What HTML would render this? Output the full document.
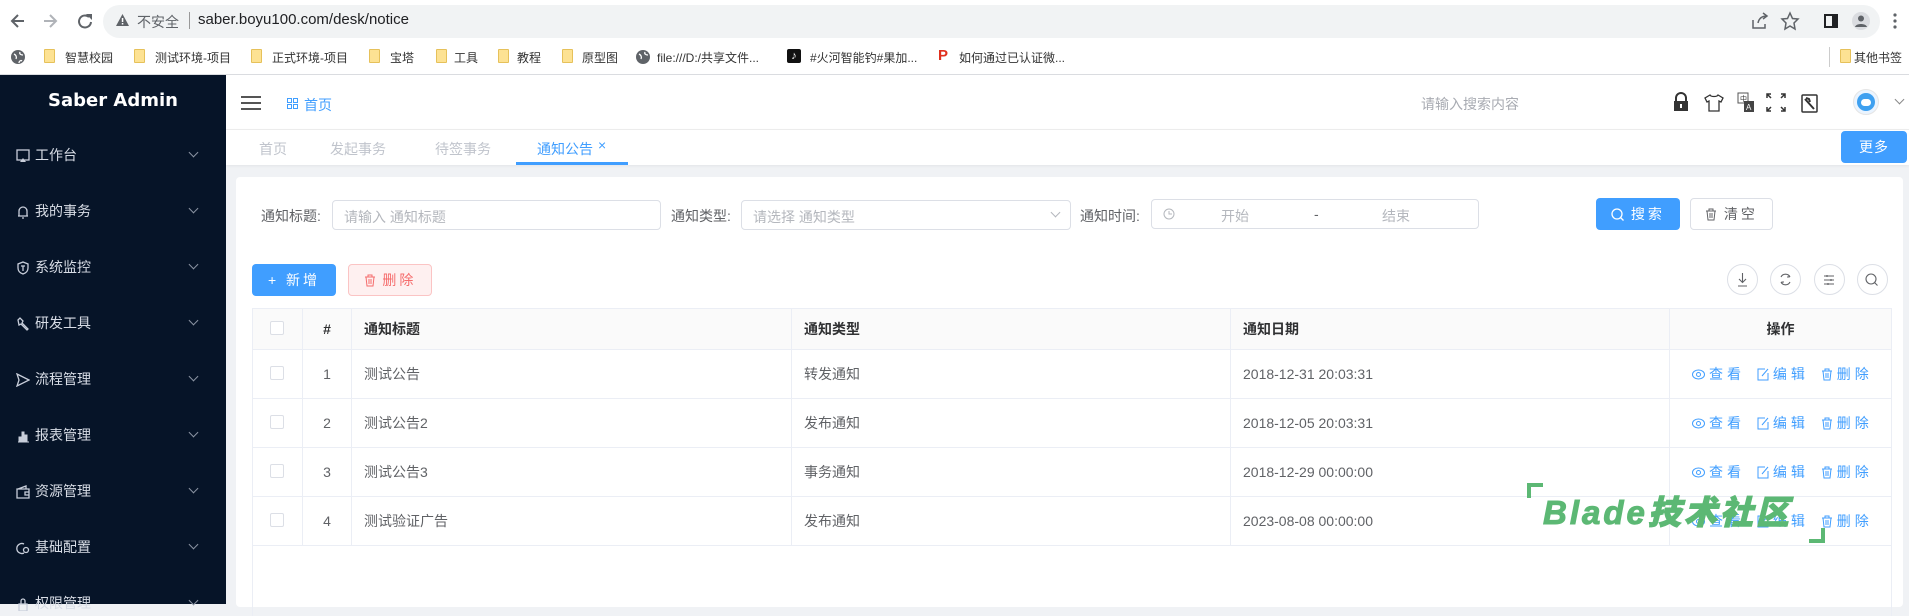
<!DOCTYPE html>
<html><head><meta charset="utf-8"><style>
*{box-sizing:border-box;margin:0;padding:0}
body{width:1909px;height:604px;overflow:hidden;background:#f0f2f5;font-family:"Liberation Sans","Noto Sans CJK SC",sans-serif;font-size:14px;color:#606266;position:relative}
.a{position:absolute}
.top{left:0;top:0;width:1909px;height:41px;background:#fff}
.omni{left:103px;top:5px;width:1777px;height:33px;background:#f1f3f4;border-radius:17px}
.bm{left:0;top:41px;width:1909px;height:34px;background:#fff;border-bottom:1px solid #dadce0;font-size:12px;color:#333}
.fold{width:11px;height:14px;background:#fde293;border:1px solid #e6c15a;border-radius:1px}
.side{left:0;top:75px;width:226px;height:529px;background:#061428}
.mi{left:16px;color:#d8dde6;font-size:14px}
.mi svg{vertical-align:-3px;margin-right:5px}
.chev{left:190px;width:7px;height:7px;border-right:1px solid #8a93a2;border-bottom:1px solid #8a93a2;transform:rotate(45deg)}
.hdr{left:226px;top:75px;width:1683px;height:55px;background:#fff;border-bottom:1px solid #eee}
.tabs{left:226px;top:130px;width:1683px;height:35px;background:#fff;box-shadow:0 1px 3px rgba(0,0,0,.06)}
.card{left:236px;top:177px;width:1667px;height:430px;background:#fff;border-radius:4px}
.inp{border:1px solid #dcdfe6;border-radius:4px;background:#fff;color:#b4b7bd;font-size:14px}
.btn{border-radius:4px;font-size:14px;text-align:center;letter-spacing:3px}
.rb{width:31px;height:31px;border:1px solid #dcdfe6;border-radius:50%;background:#fff}
table{border-collapse:collapse;position:absolute;left:252px;top:308px;width:1639px;table-layout:fixed}
td,th{border:1px solid #ebeef5;height:49px;font-size:14px;padding-left:12px;text-align:left}
th{background:#fafafa;color:#303133;font-weight:bold;height:41px}
td{color:#606266}
.cb{display:inline-block;width:14px;height:14px;border:1px solid #dcdfe6;border-radius:2px;background:#fff}
.op{color:#409eff;letter-spacing:4px;white-space:nowrap}
.op svg{vertical-align:-2px;margin-right:4px}
.op span{margin-right:4px}
</style></head><body>
<div class="a top"></div>
<svg class="a" style="left:10px;top:12px" width="90" height="18" viewBox="0 0 90 18"><path d="M14 9H3M8 3L2 9l6 6" stroke="#5f6368" stroke-width="2" fill="none"/><path d="M34 9H45M40 3l6 6-6 6" stroke="#b0b3b8" stroke-width="2" fill="none"/><path d="M79 5a6 6 0 1 0 2 5" stroke="#5f6368" stroke-width="2" fill="none"/><path d="M76 2h6v6z" fill="#5f6368"/></svg>
<div class="a omni"></div>
<svg class="a" style="left:115px;top:13px" width="15" height="14"><path d="M7.5 1L14 13H1z" fill="#5f6368"/><rect x="6.8" y="5" width="1.5" height="4" fill="#fff"/><rect x="6.8" y="10" width="1.5" height="1.5" fill="#fff"/></svg>
<div class="a" style="left:137px;top:12px;font-size:14px;color:#5f6368">不安全</div>
<div class="a" style="left:189px;top:12px;width:1px;height:17px;background:#999"></div>
<div class="a" style="left:198px;top:11px;font-size:15px;color:#202124">saber.boyu100.com/desk/notice</div>
<svg class="a" style="left:1750px;top:11px" width="160" height="20"><path d="M3 9v8h12v-4M8 12c1-5 4-7 9-7M13 2l4 3-4 3" stroke="#5f6368" stroke-width="1.5" fill="none"/><path d="M40 2l2.5 5.5 5.5.5-4 4 1 6-5-3-5 3 1-6-4-4 5.5-.5z" stroke="#5f6368" stroke-width="1.5" fill="none"/><rect x="75" y="4" width="12" height="12" stroke="#202124" stroke-width="2" fill="none"/><rect x="82" y="4" width="5" height="12" fill="#202124"/><circle cx="111" cy="10" r="9" fill="#dadce0"/><circle cx="111" cy="7.5" r="3" fill="#5f6368"/><path d="M105 16c1-4 11-4 12 0" fill="#5f6368"/><circle cx="145" cy="4" r="1.6" fill="#5f6368"/><circle cx="145" cy="10" r="1.6" fill="#5f6368"/><circle cx="145" cy="16" r="1.6" fill="#5f6368"/></svg>
<div class="a bm"></div>
<svg class="a" style="left:11px;top:50px" width="14" height="14"><circle cx="7" cy="7" r="7" fill="#5f6368"/><path d="M3 4c2 1 3 3 2 5M9 2c-1 2 1 3 3 3M8 13c0-2 2-3 3-2" stroke="#fff" stroke-width="1.3" fill="none"/></svg>
<div class="a fold" style="left:44px;top:49px"></div><div class="a" style="left:65px;top:49px;font-size:12px;color:#333">智慧校园</div>
<div class="a fold" style="left:134px;top:49px"></div><div class="a" style="left:155px;top:49px;font-size:12px;color:#333">测试环境-项目</div>
<div class="a fold" style="left:251px;top:49px"></div><div class="a" style="left:272px;top:49px;font-size:12px;color:#333">正式环境-项目</div>
<div class="a fold" style="left:369px;top:49px"></div><div class="a" style="left:390px;top:49px;font-size:12px;color:#333">宝塔</div>
<div class="a fold" style="left:436px;top:49px"></div><div class="a" style="left:454px;top:49px;font-size:12px;color:#333">工具</div>
<div class="a fold" style="left:498px;top:49px"></div><div class="a" style="left:517px;top:49px;font-size:12px;color:#333">教程</div>
<div class="a fold" style="left:562px;top:49px"></div><div class="a" style="left:582px;top:49px;font-size:12px;color:#333">原型图</div>
<svg class="a" style="left:636px;top:50px" width="14" height="14"><circle cx="7" cy="7" r="7" fill="#5f6368"/><path d="M3 4c2 1 3 3 2 5M9 2c-1 2 1 3 3 3" stroke="#fff" stroke-width="1.3" fill="none"/></svg>
<div class="a" style="left:657px;top:49px;font-size:12px;color:#333">file:///D:/共享文件...</div>
<div class="a" style="left:787px;top:49px;width:14px;height:14px;background:#111;border-radius:2px;color:#fff;font-size:11px;text-align:center;line-height:14px">♪</div>
<div class="a" style="left:810px;top:49px;font-size:12px;color:#333">#火河智能钓#果加...</div>
<div class="a" style="left:938px;top:47px;color:#e0301e;font-weight:bold;font-size:15px">P</div>
<div class="a" style="left:959px;top:49px;font-size:12px;color:#333">如何通过已认证微...</div>
<div class="a" style="left:1829px;top:47px;width:1px;height:20px;background:#ccc"></div>
<div class="a fold" style="left:1840px;top:49px"></div><div class="a" style="left:1854px;top:49px;font-size:12px;color:#333">其他书签</div>

<div class="a side"></div>
<div class="a" style="left:0;top:90px;width:226px;text-align:center;color:#fff;font-weight:bold;font-size:18px;font-family:'DejaVu Sans','Liberation Sans',sans-serif">Saber Admin</div>
<div class="a mi" style="top:145px"><svg width="14" height="14"><rect x="1" y="1" width="12" height="10" stroke="#c8ceda" fill="none" stroke-width="1.3"/><path d="M4 13l3-4 3 4z" fill="#c8ceda"/></svg>工作台</div>
<div class="a mi" style="top:201px"><svg width="14" height="14"><path d="M3 11V6a4 4 0 0 1 8 0v5H2h10M6 13h2" stroke="#c8ceda" fill="none" stroke-width="1.3"/></svg>我的事务</div>
<div class="a mi" style="top:257px"><svg width="14" height="14"><path d="M7 1l5 2v4c0 3-2 5-5 6-3-1-5-3-5-6V3z M5 5h4M7 5v5" stroke="#c8ceda" fill="none" stroke-width="1.3"/></svg>系统监控</div>
<div class="a mi" style="top:313px"><svg width="14" height="14"><path d="M2 3l2-2 3 3-1 2 6 6-1 1-6-6-2 1z" stroke="#c8ceda" fill="none" stroke-width="1.3"/></svg>研发工具</div>
<div class="a mi" style="top:369px"><svg width="14" height="14"><path d="M1 1l12 6-12 6 2-6z" stroke="#c8ceda" fill="none" stroke-width="1.3"/></svg>流程管理</div>
<div class="a mi" style="top:425px"><svg width="14" height="14"><path d="M2 13h11M3 8h2v5H3zM6 3h2v10H6zM9 6h2v7H9z" fill="#c8ceda" stroke="#c8ceda"/></svg>报表管理</div>
<div class="a mi" style="top:481px"><svg width="14" height="14"><path d="M1 4h12v9H1zM2 4l8-3v3M9 7h4v3H9z" stroke="#c8ceda" fill="none" stroke-width="1.3"/></svg>资源管理</div>
<div class="a mi" style="top:537px"><svg width="14" height="14"><path d="M8 3a5 5 0 1 0 0 9" stroke="#c8ceda" fill="none" stroke-width="1.3"/><circle cx="10" cy="9" r="2.5" stroke="#c8ceda" fill="none" stroke-width="1.3"/></svg>基础配置</div>
<div class="a mi" style="top:593px"><svg width="14" height="14"><path d="M3 7h8v7H3zM5 7V4a2 2 0 0 1 4 0v3" stroke="#c8ceda" fill="none" stroke-width="1.3"/></svg>权限管理</div>
<div class="a chev" style="top:149px"></div><div class="a chev" style="top:205px"></div><div class="a chev" style="top:261px"></div><div class="a chev" style="top:317px"></div><div class="a chev" style="top:373px"></div><div class="a chev" style="top:429px"></div><div class="a chev" style="top:485px"></div><div class="a chev" style="top:541px"></div><div class="a chev" style="top:597px"></div>

<div class="a hdr"></div>
<svg class="a" style="left:241px;top:95px" width="20" height="16"><path d="M0 2h20M0 8h20M0 14h20" stroke="#555" stroke-width="2"/></svg>
<svg class="a" style="left:287px;top:98px" width="11" height="11"><g stroke="#409eff" fill="none"><rect x="0.5" y="0.5" width="4" height="4"/><rect x="6.5" y="0.5" width="4" height="4"/><rect x="0.5" y="6.5" width="4" height="4"/><rect x="6.5" y="6.5" width="4" height="4"/></g></svg>
<div class="a" style="left:304px;top:95px;color:#409eff;font-size:14px">首页</div>
<div class="a" style="left:1421px;top:94px;color:#a8abb2;font-size:14px">请输入搜索内容</div>
<svg class="a" style="left:1672px;top:92px" width="150" height="22"><path d="M4 9V6a5 5 0 0 1 10 0v3" stroke="#333" stroke-width="2" fill="none"/><rect x="2" y="9" width="14" height="10" fill="#333"/><rect x="8" y="12" width="2" height="4" fill="#fff"/><path d="M38 3l-5 3 2 4 2-1v10h10V9l2 1 2-4-5-3c-1 2-7 2-8 0z" stroke="#333" stroke-width="1.3" fill="none"/><rect x="66" y="1" width="10" height="10" stroke="#555" fill="#fff"/><text x="68" y="9" font-size="7" fill="#333">中</text><rect x="72" y="9" width="10" height="11" fill="#444"/><text x="74" y="18" font-size="8" fill="#fff">A</text><path d="M99 2h-4v4M95 2l4 4M109 2h4v4M113 2l-4 4M99 19h-4v-4M95 19l4-4M109 19h4v-4M113 19l-4-4" stroke="#333" stroke-width="1.5" fill="none"/><rect x="130" y="3" width="15" height="17" rx="1" stroke="#333" stroke-width="1.5" fill="none"/><path d="M133 7l9 10M134 6l3 1 1 3" stroke="#333" stroke-width="2" fill="none"/></svg>
<div class="a" style="left:1853px;top:89px;width:26px;height:26px;border-radius:50%;background:#eaf4ff;border:1px solid #e5e5e5"></div>
<div class="a" style="left:1857px;top:93px;width:18px;height:18px;border-radius:50%;background:#3ea0f0"></div>
<div class="a" style="left:1861px;top:99px;width:10px;height:7px;border-radius:4px;background:#fff"></div>
<div class="a" style="left:1896px;top:96px;width:7px;height:7px;border-right:1px solid #888;border-bottom:1px solid #888;transform:rotate(45deg)"></div>

<div class="a tabs"></div>
<div class="a" style="left:259px;top:139px;color:#c0c4cc">首页</div>
<div class="a" style="left:330px;top:139px;color:#c0c4cc">发起事务</div>
<div class="a" style="left:435px;top:139px;color:#c0c4cc">待签事务</div>
<div class="a" style="left:537px;top:139px;color:#409eff">通知公告</div>
<div class="a" style="left:598px;top:137px;color:#409eff;font-size:14px">×</div>
<div class="a" style="left:516px;top:162px;width:112px;height:3px;background:#409eff"></div>
<div class="a btn" style="left:1841px;top:131px;width:66px;height:32px;background:#409eff;color:#fff;line-height:32px;letter-spacing:1px">更多</div>

<div class="a card"></div>
<div class="a" style="left:261px;top:206px">通知标题:</div>
<div class="a inp" style="left:332px;top:200px;width:329px;height:30px;padding:6px 11px">请输入 通知标题</div>
<div class="a" style="left:671px;top:206px">通知类型:</div>
<div class="a inp" style="left:741px;top:200px;width:330px;height:30px;padding:6px 11px">请选择 通知类型</div>
<div class="a" style="left:1052px;top:209px;width:7px;height:7px;border-right:1px solid #b4b7bd;border-bottom:1px solid #b4b7bd;transform:rotate(45deg)"></div>
<div class="a" style="left:1080px;top:206px">通知时间:</div>
<div class="a inp" style="left:1151px;top:199px;width:328px;height:30px"></div>
<svg class="a" style="left:1163px;top:208px" width="12" height="12"><circle cx="6" cy="6" r="5" stroke="#b4b7bd" fill="none"/><path d="M6 3v3h3" stroke="#b4b7bd" fill="none"/></svg>
<div class="a" style="left:1221px;top:206px;color:#b4b7bd">开始</div>
<div class="a" style="left:1314px;top:206px;color:#606266">-</div>
<div class="a" style="left:1382px;top:206px;color:#b4b7bd">结束</div>
<div class="a btn" style="left:1596px;top:198px;width:84px;height:32px;background:#409eff;color:#fff;line-height:32px">
<svg width="13" height="13" style="vertical-align:-2px"><circle cx="6" cy="6" r="5" stroke="#fff" fill="none" stroke-width="1.3"/><path d="M9.5 9.5l3 3" stroke="#fff" stroke-width="1.3"/></svg> 搜索</div>
<div class="a btn" style="left:1690px;top:198px;width:83px;height:32px;border:1px solid #dcdfe6;background:#fff;color:#606266;line-height:30px">
<svg width="12" height="13" style="vertical-align:-2px"><path d="M1 3h10M4 3V1h4v2M2 3l1 9h6l1-9M5 5v5M7 5v5" stroke="#606266" fill="none"/></svg> 清空</div>

<div class="a btn" style="left:252px;top:264px;width:84px;height:32px;background:#409eff;color:#fff;line-height:32px">+ 新增</div>
<div class="a btn" style="left:348px;top:264px;width:84px;height:32px;background:#fef0f0;border:1px solid #fbc4c4;color:#f56c6c;line-height:30px">
<svg width="12" height="13" style="vertical-align:-2px"><path d="M1 3h10M4 3V1h4v2M2 3l1 9h6l1-9M5 5v5M7 5v5" stroke="#f56c6c" fill="none"/></svg> 删除</div>
<div class="a rb" style="left:1727px;top:264px"></div><div class="a rb" style="left:1770px;top:264px"></div><div class="a rb" style="left:1814px;top:264px"></div><div class="a rb" style="left:1857px;top:264px"></div>
<svg class="a" style="left:1727px;top:264px" width="170" height="31"><g stroke="#606266" fill="none" stroke-width="1.1"><path d="M15.5 9v9M12 15l3.5 3.5L19 15M11 22h9"/><path d="M54 13a5 5 0 0 1 9 0M63 18a5 5 0 0 1-9 0M62 11v2h-2M55 20v-2h2"/><path d="M97 12h10M97 16h10M97 20h10M100 11v2M104 15v2M101 19v2"/><circle cx="144" cy="15" r="5"/><path d="M147.5 18.5l3 3"/></g></svg>

<table>
<colgroup><col style="width:50px"><col style="width:49px"><col style="width:440px"><col style="width:439px"><col style="width:439px"><col style="width:222px"></colgroup>
<tr><th style="padding-left:17px"><span class="cb"></span></th><th style="text-align:center;padding:0">#</th><th>通知标题</th><th>通知类型</th><th>通知日期</th><th style="text-align:center;padding:0">操作</th></tr>
<tr><td style="padding-left:17px"><span class="cb"></span></td><td style="text-align:center;padding:0">1</td><td>测试公告</td><td>转发通知</td><td>2018-12-31 20:03:31</td><td class="op" style="padding-left:22px"><svg width="13" height="13"><ellipse cx="6.5" cy="6.5" rx="6" ry="4.5" stroke="#409eff" fill="none"/><circle cx="6.5" cy="6.5" r="2" stroke="#409eff" fill="none"/></svg><span>查看</span> <svg width="12" height="13"><path d="M8 1H1v11h10V5M5 8l6-7" stroke="#409eff" fill="none"/></svg><span>编辑</span> <svg width="12" height="13"><path d="M1 3h10M4 3V1h4v2M2 3l1 9h6l1-9M5 5v5M7 5v5" stroke="#409eff" fill="none"/></svg>删除</td></tr>
<tr><td style="padding-left:17px"><span class="cb"></span></td><td style="text-align:center;padding:0">2</td><td>测试公告2</td><td>发布通知</td><td>2018-12-05 20:03:31</td><td class="op" style="padding-left:22px"><svg width="13" height="13"><ellipse cx="6.5" cy="6.5" rx="6" ry="4.5" stroke="#409eff" fill="none"/><circle cx="6.5" cy="6.5" r="2" stroke="#409eff" fill="none"/></svg><span>查看</span> <svg width="12" height="13"><path d="M8 1H1v11h10V5M5 8l6-7" stroke="#409eff" fill="none"/></svg><span>编辑</span> <svg width="12" height="13"><path d="M1 3h10M4 3V1h4v2M2 3l1 9h6l1-9M5 5v5M7 5v5" stroke="#409eff" fill="none"/></svg>删除</td></tr>
<tr><td style="padding-left:17px"><span class="cb"></span></td><td style="text-align:center;padding:0">3</td><td>测试公告3</td><td>事务通知</td><td>2018-12-29 00:00:00</td><td class="op" style="padding-left:22px"><svg width="13" height="13"><ellipse cx="6.5" cy="6.5" rx="6" ry="4.5" stroke="#409eff" fill="none"/><circle cx="6.5" cy="6.5" r="2" stroke="#409eff" fill="none"/></svg><span>查看</span> <svg width="12" height="13"><path d="M8 1H1v11h10V5M5 8l6-7" stroke="#409eff" fill="none"/></svg><span>编辑</span> <svg width="12" height="13"><path d="M1 3h10M4 3V1h4v2M2 3l1 9h6l1-9M5 5v5M7 5v5" stroke="#409eff" fill="none"/></svg>删除</td></tr>
<tr><td style="padding-left:17px"><span class="cb"></span></td><td style="text-align:center;padding:0">4</td><td>测试验证广告</td><td>发布通知</td><td>2023-08-08 00:00:00</td><td class="op" style="padding-left:22px"><svg width="13" height="13"><ellipse cx="6.5" cy="6.5" rx="6" ry="4.5" stroke="#409eff" fill="none"/><circle cx="6.5" cy="6.5" r="2" stroke="#409eff" fill="none"/></svg><span>查看</span> <svg width="12" height="13"><path d="M8 1H1v11h10V5M5 8l6-7" stroke="#409eff" fill="none"/></svg><span>编辑</span> <svg width="12" height="13"><path d="M1 3h10M4 3V1h4v2M2 3l1 9h6l1-9M5 5v5M7 5v5" stroke="#409eff" fill="none"/></svg>删除</td></tr>
<tr><td colspan="6" style="height:70px;border-bottom:none"></td></tr>
</table>

<div class="a" style="left:1527px;top:483px;width:16px;height:15px;border-left:4px solid #5cb874;border-top:4px solid #5cb874"></div>
<div class="a" style="left:1809px;top:528px;width:16px;height:15px;border-right:4px solid #5cb874;border-bottom:4px solid #5cb874"></div>
<div class="a" style="left:1543px;top:494px;color:#5cb874;font-size:33px;font-weight:900;font-style:italic;letter-spacing:3px;line-height:38px;-webkit-text-stroke:1px #5cb874">Blade技术社区</div>
</body></html>
